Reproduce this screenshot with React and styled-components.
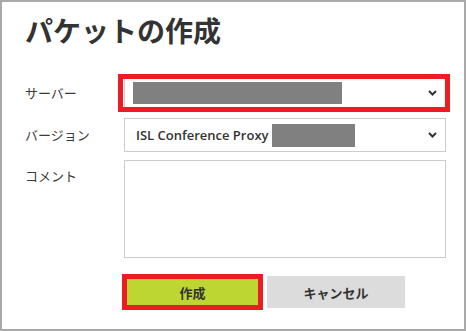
import React from "react";
import styled, { createGlobalStyle } from "styled-components";

const GlobalStyle = createGlobalStyle`
  html, body {
    margin: 0;
    padding: 0;
    background: #ffffff;
  }
  body {
    font-family: "Noto Sans CJK JP", "Noto Sans", sans-serif;
    color: #333;
  }
`;

const Frame = styled.div`
  width: 466px;
  height: 331px;
  box-sizing: border-box;
  border: 2px solid #aaa9aa;
  padding: 12px 18px 0 23px;
  background: #fff;
`;

const Title = styled.h1`
  margin: 0;
  font-size: 28px;
  line-height: 32px;
  font-weight: 700;
  color: #333;
`;

const Form = styled.div`
  display: flex;
  flex-direction: column;
  margin-top: 28px;
`;

const Row = styled.div`
  display: grid;
  grid-template-columns: 99px 322px;
  align-items: ${(p) => (p.$top ? "start" : "center")};
  margin-top: ${(p) => p.$gap || 0}px;
`;

const Label = styled.div`
  font-size: 13px;
  line-height: 20px;
  color: #3a3a3a;
  padding-top: ${(p) => p.$pad || 0}px;
`;

const Highlight = styled.div`
  border: 5px solid #ed1c24;
  margin-left: -6px;
  margin-right: -4px;
  padding-left: 1px;
  display: flex;
`;

const Select = styled.div`
  position: relative;
  flex: 1;
  display: flex;
  align-items: center;
  box-sizing: border-box;
  height: ${(p) => (p.$bare ? 28 : 34)}px;
  border: 1px solid #cccccc;
  ${(p) => p.$bare && "border-width: 0 0 0 1px;"}
  padding-left: ${(p) => (p.$bare ? 8 : 11)}px;
  background: #fff;
`;

const SelectText = styled.span`
  font-family: "Open Sans", "Noto Sans", sans-serif;
  font-weight: 600;
  font-size: 13px;
  color: #333;
`;

const Redacted = styled.span`
  display: inline-block;
  background: #808080;
  width: ${(p) => p.$w}px;
  height: ${(p) => p.$h}px;
  margin-left: ${(p) => p.$ml || 0}px;
`;

const Chevron = styled.svg`
  position: absolute;
  right: ${(p) => p.$right}px;
  top: 50%;
  margin-top: -3px;
  width: 9px;
  height: 6px;
`;

const TextArea = styled.div`
  box-sizing: border-box;
  height: 98px;
  border: 1px solid #cccccc;
  background: #fff;
`;

const Buttons = styled.div`
  display: flex;
  align-items: center;
  gap: 4px;
  margin-left: -2px;
`;

const RedBox = styled.div`
  border: 5px solid #ed1c24;
  display: flex;
`;

const Button = styled.div`
  display: flex;
  align-items: center;
  justify-content: center;
  width: ${(p) => p.$w}px;
  height: ${(p) => p.$h}px;
  background: ${(p) => p.$bg};
  font-size: 13px;
  font-weight: 700;
  color: #333;
`;

const ChevronIcon = ({ right }) => (
  <Chevron $right={right} viewBox="0 0 9 6">
    <path d="M1 1 L4.5 4.5 L8 1" fill="none" stroke="#333" strokeWidth="2" />
  </Chevron>
);

export default function App() {
  return (
    <>
      <GlobalStyle />
      <Frame>
        <Title>パケットの作成</Title>
        <Form>
          <Row>
            <Label>サーバー</Label>
            <Highlight>
              <Select $bare>
                <Redacted $w={209} $h={22} />
                <ChevronIcon right={8} />
              </Select>
            </Highlight>
          </Row>
          <Row $gap={6}>
            <Label>バージョン</Label>
            <Select>
              <SelectText>ISL Conference Proxy</SelectText>
              <Redacted $w={83} $h={23} $ml={3} />
              <ChevronIcon right={8} />
            </Select>
          </Row>
          <Row $gap={8} $top>
            <Label $pad={6}>コメント</Label>
            <TextArea />
          </Row>
          <Row $gap={16}>
            <div />
            <Buttons>
              <RedBox>
                <Button $w={131} $h={26} $bg="#bdd632">
                  作成
                </Button>
              </RedBox>
              <Button $w={138} $h={32} $bg="#dcdcdc">
                キャンセル
              </Button>
            </Buttons>
          </Row>
        </Form>
      </Frame>
    </>
  );
}
